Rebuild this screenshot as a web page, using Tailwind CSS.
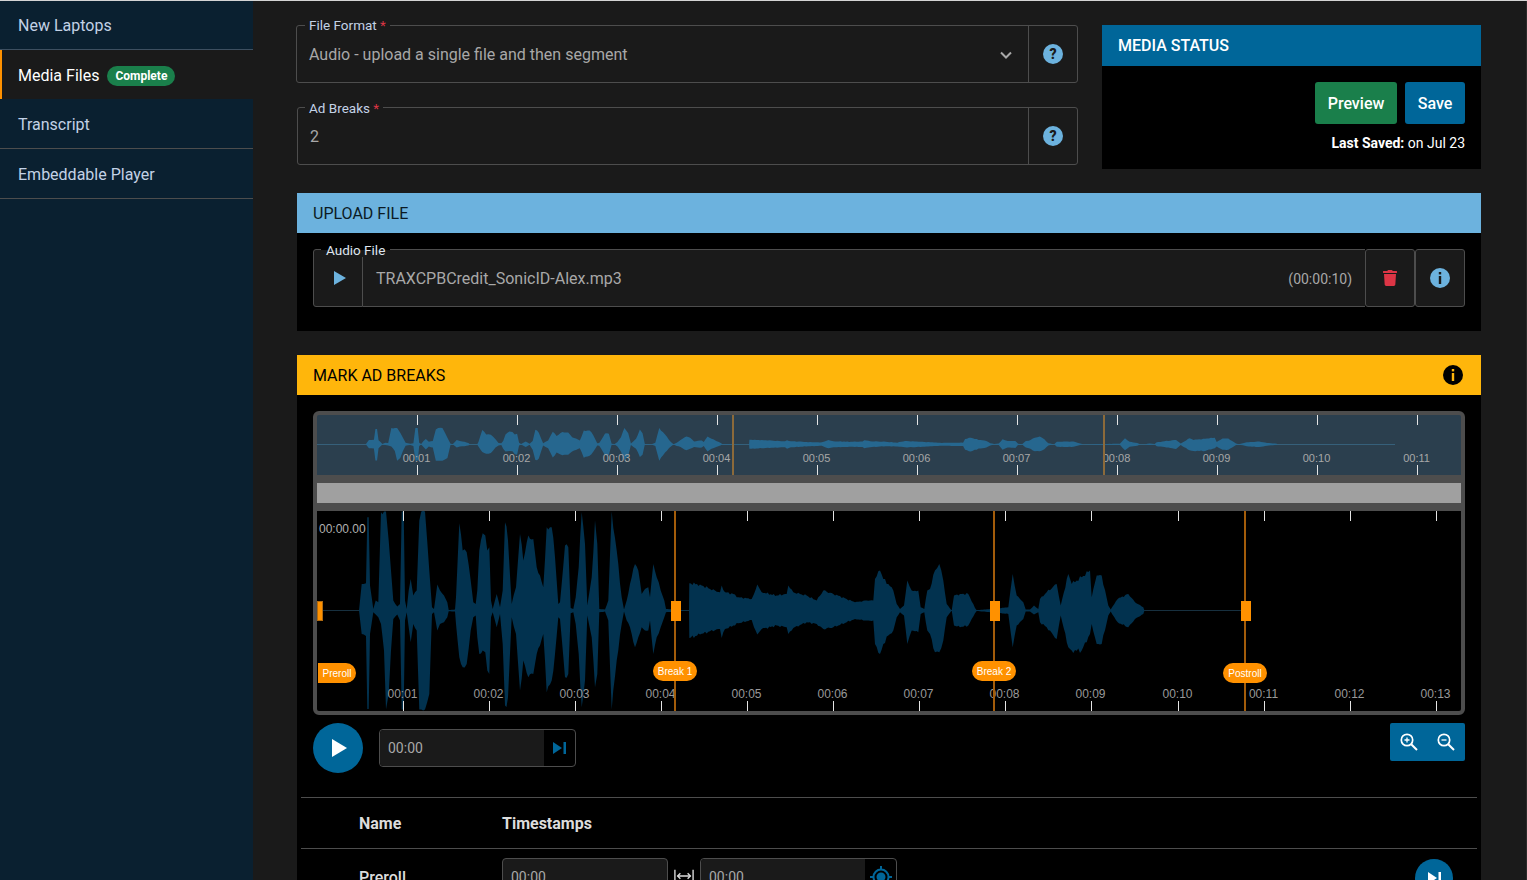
<!DOCTYPE html>
<html lang="en">
<head>
    <meta charset="UTF-8">
    <meta name="viewport" content="width=device-width, initial-scale=1.0">
    <title>Media Files</title>
    <script src="https://cdn.jsdelivr.net/npm/@tailwindcss/browser@4"></script>
</head>
<body class="h-screen overflow-hidden bg-[#1a1a1a] font-['Roboto',sans-serif] text-white">
    <div class="h-px bg-[#d4d4d4]"></div>
    <div class="flex h-[879px]">
        <!-- Sidebar -->
        <nav class="w-[253px] shrink-0 bg-[#0a2030] text-base text-[#c3d2e6]">
            <a class="flex h-[49px] items-center border-b border-[#3d4f60] pl-[18px] pt-[2px]">New Laptops</a>
            <a class="flex h-[49px] items-center gap-2 border-l-2 border-[#ff9100] bg-[#1a1a1a] pl-4 pt-[3px] text-white">Media Files
                <span class="rounded-full bg-[#1a7f4b] px-2 py-[1px] text-xs font-bold leading-[18px]">Complete</span>
            </a>
            <a class="flex h-[50px] items-center border-b border-[#4d4d4d] pl-[18px] pt-[2px]">Transcript</a>
            <a class="flex h-[50px] items-center border-b border-[#4d4d4d] pl-[18px] pt-[2px]">Embeddable Player</a>
        </nav>

        <main class="w-[1273px] overflow-hidden pl-11 pr-[45px] pt-6">
            <!-- Top form and status -->
            <div class="flex gap-6">
                <div class="flex w-[781px] flex-col gap-6">
                    <div class="relative -ml-px flex h-[58px] rounded-[3px] border border-[#4d4d4d]">
                        <span class="absolute -top-[8px] left-2 bg-[#1a1a1a] px-1 text-[13.5px] leading-[14px] text-[#c3d2e6]">File Format <span class="text-[#dc3545]">*</span></span>
                        <div class="flex flex-1 items-center justify-between pl-3 pr-[14px] pt-[2px] text-base text-[#a8a8a8]">
                            Audio - upload a single file and then segment
                            <svg class="h-4 w-4" viewBox="0 0 16 16" fill="none" stroke="#a8a8a8" stroke-width="2"><path d="M3 5.500l5 5 5-5"/></svg>
                        </div>
                        <div class="flex w-[49px] items-center justify-center border-l border-[#4d4d4d]">
                            <span class="flex h-5 w-5 items-center justify-center rounded-full bg-[#6cb2de] text-sm font-black text-[#1a1a1a]">?</span>
                        </div>
                    </div>
                    <div class="relative flex h-[58px] rounded-[3px] border border-[#4d4d4d]">
                        <span class="absolute -top-[7px] left-[7px] bg-[#1a1a1a] px-1 text-[13.5px] leading-[14px] text-[#c3d2e6]">Ad Breaks <span class="text-[#dc3545]">*</span></span>
                        <div class="flex flex-1 items-center pl-3 pt-[2px] text-base text-[#a8a8a8]">2</div>
                        <div class="flex w-[49px] items-center justify-center border-l border-[#4d4d4d]">
                            <span class="flex h-5 w-5 items-center justify-center rounded-full bg-[#6cb2de] text-sm font-black text-[#1a1a1a]">?</span>
                        </div>
                    </div>
                </div>
                <section class="h-[144px] w-[379px] bg-black">
                    <h2 class="flex h-[41px] items-center bg-[#006699] pl-4 text-base font-medium">MEDIA STATUS</h2>
                    <div class="flex justify-end gap-2 pr-4 pt-4">
                        <button class="h-[42px] w-[82px] rounded-[3px] bg-[#1a7f4b] pt-[2px] text-base font-medium">Preview</button>
                        <button class="h-[42px] w-[60px] rounded-[3px] bg-[#006699] pt-[2px] text-base font-medium">Save</button>
                    </div>
                    <p class="mt-[10px] pr-4 text-right text-sm leading-[18px]"><b>Last Saved:</b> on Jul 23</p>
                </section>
            </div>

            <!-- Upload file -->
            <section class="mt-6 bg-black pb-6">
                <h2 class="flex h-10 items-center bg-[#6cb2de] pl-4 pt-[2px] text-base text-[#0b1a24]">UPLOAD FILE</h2>
                <div class="relative mx-4 mt-4 flex h-[58px] text-[#a8a8a8]">
                    <span class="absolute -top-[6px] left-2 z-10 bg-[linear-gradient(#000_50%,#1a1a1a_50%)] px-[5px] text-[13.5px] leading-[14px] text-[#dfe6ef]">Audio File</span>
                    <div class="flex w-[50px] items-center justify-center rounded-l-[3px] border border-[#4d4d4d] bg-[#1a1a1a] pl-1">
                        <svg class="h-[14px] w-3" viewBox="0 0 12 14" fill="#6cb2de"><path d="M0 0l12 7-12 7z"/></svg>
                    </div>
                    <div class="flex flex-1 items-center justify-between border-y border-[#4d4d4d] bg-[#1a1a1a] px-[13px] pt-[2px] text-base">
                        TRAXCPBCredit_SonicID-Alex.mp3
                        <span class="text-sm">(00:00:10)</span>
                    </div>
                    <div class="flex w-[50px] items-center justify-center rounded-[3px] border border-[#4d4d4d] bg-[#1a1a1a]">
                        <svg class="h-[18px] w-[14px]" viewBox="0 0 448 512" fill="#dc3545"><path d="M432 32H312l-9.400-18.700A24 24 0 0 0 281.100 0H166.800a23.720 23.720 0 0 0-21.400 13.300L136 32H16A16 16 0 0 0 0 48v32a16 16 0 0 0 16 16h416a16 16 0 0 0 16-16V48a16 16 0 0 0-16-16zM53.200 467a48 48 0 0 0 47.900 45h245.800a48 48 0 0 0 47.900-45L416 128H32z"/></svg>
                    </div>
                    <div class="flex w-[50px] items-center justify-center rounded-[3px] border border-[#4d4d4d] bg-[#1a1a1a]">
                        <svg class="h-5 w-5" viewBox="0 0 20 20"><circle cx="10" cy="10" r="10" fill="#6cb2de"/><rect x="8.800" y="4" width="2.400" height="2.400" fill="#1a1a1a"/><rect x="8.800" y="8" width="2.400" height="8" fill="#1a1a1a"/></svg>
                    </div>
                </div>
            </section>

            <!-- Mark ad breaks -->
            <section class="mt-6 h-[600px] bg-black">
                <h2 class="flex h-10 items-center justify-between bg-[#ffb60b] pl-4 pr-[18px] text-base text-black"><span class="pt-[2px]">MARK AD BREAKS</span>
                    <svg class="h-5 w-5" viewBox="0 0 20 20"><circle cx="10" cy="10" r="10" fill="#000"/><rect x="8.800" y="4" width="2.400" height="2.400" fill="#ffb60b"/><rect x="8.800" y="8" width="2.400" height="8" fill="#ffb60b"/></svg>
                </h2>

                <!-- Waveform canvas -->
                <div class="relative mx-4 mt-4 h-[304px] overflow-hidden rounded-md border-4 border-[#4d4d4d] bg-[#4d4d4d]">
                    <svg id="mini" class="block h-[60px] w-[1144px] bg-[#2b3f4e]" viewBox="317 415 1144 60"></svg>
                    <div class="mx-0 mt-2 h-5 bg-[#a0a0a0]"></div>
                    <svg id="overview" class="mt-2 block h-[200px] w-[1144px] bg-black" viewBox="317 511 1144 200"></svg>

                    <span class="absolute left-0 top-[186px] h-5 w-[6px] border border-[#b06a10] bg-[#ff9100]"></span>
                    <span class="absolute left-[354px] top-[186px] h-5 w-[10px] bg-[#ff9100]"></span>
                    <span class="absolute left-[673px] top-[186px] h-5 w-[10px] bg-[#ff9100]"></span>
                    <span class="absolute left-[924px] top-[186px] h-5 w-[10px] bg-[#ff9100]"></span>

                    <span class="absolute left-[1px] top-[248px] flex h-5 w-[38px] items-center justify-center rounded-r-full bg-[#ff9100] font-['Liberation_Sans',sans-serif] text-[10px]">Preroll</span>
                    <span class="absolute left-[336px] top-[246px] flex h-5 w-[44px] items-center justify-center rounded-full bg-[#ff9100] font-['Liberation_Sans',sans-serif] text-[10px]">Break 1</span>
                    <span class="absolute left-[655px] top-[246px] flex h-5 w-[44px] items-center justify-center rounded-full bg-[#ff9100] font-['Liberation_Sans',sans-serif] text-[10px]">Break 2</span>
                    <span class="absolute left-[906px] top-[248px] flex h-5 w-[44px] items-center justify-center rounded-full bg-[#ff9100] font-['Liberation_Sans',sans-serif] text-[10px]">Postroll</span>
                </div>

                <!-- Player controls -->
                <div class="mx-4 mt-2 flex items-start justify-between">
                    <div class="flex items-center gap-4">
                        <button class="flex h-[50px] w-[50px] items-center justify-center rounded-full bg-[#006699]">
                            <svg class="ml-[3px] h-[18px] w-[15px]" viewBox="0 0 15 18" fill="#fff"><path d="M0 0l15 9-15 9z"/></svg>
                        </button>
                        <div class="flex h-[38px] w-[197px] rounded border border-[#4d4d4d]">
                            <div class="flex w-[164px] items-center rounded-l bg-[#1a1a1a] pl-2 text-sm text-[#a8a8a8]">00:00</div>
                            <div class="flex flex-1 items-center justify-center">
                                <svg class="h-3 w-[13px]" viewBox="0 0 13 12" fill="#006699"><path d="M0 0l9 6-9 6z"/><rect x="10.500" width="2.500" height="12"/></svg>
                            </div>
                        </div>
                    </div>
                    <div class="flex h-[38px] w-[75px] items-center justify-between rounded-[2px] bg-[#006699] px-[10px]">
                        <svg class="h-[18px] w-[18px]" viewBox="0 0 18 18" fill="none" stroke="#fff" stroke-width="1.700"><circle cx="7" cy="7" r="5.700"/><path d="M11.200 11.200L17 17" stroke-width="2"/><path d="M4.500 7h5M7 4.500v5" stroke-width="1.300"/></svg>
                        <svg class="h-[18px] w-[18px]" viewBox="0 0 18 18" fill="none" stroke="#fff" stroke-width="1.700"><circle cx="7" cy="7" r="5.700"/><path d="M11.200 11.200L17 17" stroke-width="2"/><path d="M4.500 7h5" stroke-width="1.300"/></svg>
                    </div>
                </div>

                <!-- Breaks table -->
                <div class="mx-1 mt-6 border-t border-[#4d4d4d]">
                    <div class="flex h-[51px] items-center border-b border-[#4d4d4d] pt-[2px] text-base font-bold text-[#dcdcdc]">
                        <span class="w-[201px] pl-[58px]">Name</span>
                        <span>Timestamps</span>
                    </div>
                    <div class="relative flex items-start pt-[9px]">
                        <span class="mt-2 w-[201px] pl-[58px] text-base font-medium text-[#dcdcdc]">Preroll</span>
                        <div class="flex h-[38px] w-[166px] items-center rounded border border-[#4d4d4d] bg-[#1a1a1a] pl-2 text-sm text-[#a8a8a8]">00:00</div>
                        <svg class="mx-[6px] mt-[11px] h-[14px] w-5" viewBox="0 0 22 14" fill="none" stroke="#dcdcdc" stroke-width="1.500"><path d="M1 0v14M21 0v14M4 7h14"/><path d="M7 4L4 7l3 3M15 4l3 3-3 3"/></svg>
                        <div class="flex h-[38px] w-[197px] rounded border border-[#4d4d4d]">
                            <div class="flex w-[164px] items-center rounded-l bg-[#1a1a1a] pl-2 text-sm text-[#a8a8a8]">00:00</div>
                            <div class="flex flex-1 items-center justify-center">
                                <svg class="h-[22px] w-[22px]" viewBox="0 0 22 22" fill="none" stroke="#006699" stroke-width="2"><circle cx="11" cy="11" r="7.500"/><circle cx="11" cy="11" r="3.500" fill="#006699"/><path d="M11 0v4M11 18v4M0 11h4M18 11h4"/></svg>
                            </div>
                        </div>
                        <button class="absolute right-[24px] top-[10px] flex h-[38px] w-[38px] items-center justify-center rounded-full bg-[#006699]">
                            <svg class="h-3 w-[13px]" viewBox="0 0 13 12" fill="#fff"><path d="M0 0l9 6-9 6z"/><rect x="10.500" width="2.500" height="12"/></svg>
                        </button>
                    </div>
                </div>
            </section>
        </main>
        <div class="ml-auto w-px bg-[#2b2b2b]"></div>
    </div>

    <script>
        const partA = [[147,0,0],[155,80,70],[168,82,76],[172,280,295],[176,280,295],[180,75,70],[190,5,5],[197,30,12],[205,25,20],[213,295,40],[222,297,120],[228,297,297],[236,210,250],[243,120,120],[250,30,25],[262,12,12],[270,20,30],[275,297,297],[281,297,297],[285,30,30],[290,5,5],[296,60,50],[302,95,95],[310,45,40],[320,60,60],[328,270,297],[334,297,297],[345,297,297],[358,120,250],[366,10,10],[372,5,5],[382,78,60],[390,60,40],[402,45,35],[412,25,20],[416,2,2],[435,3,3],[438,40,40],[448,262,140],[458,180,170],[470,175,160],[482,90,60],[490,25,20],[497,20,15],[502,60,80],[508,180,130],[518,232,120],[526,225,125],[532,180,180],[538,190,190],[543,30,20],[548,5,5],[560,50,50],[570,10,10],[578,60,100],[585,265,285],[594,210,260],[605,20,20],[618,70,70],[630,230,240],[640,150,150],[655,225,200],[670,215,190],[680,130,130],[690,105,105],[700,70,70],[710,250,245],[725,250,210],[735,160,130],[745,20,20],[750,25,25],[765,195,200],[775,190,190],[782,8,8],[790,5,5],[797,40,40],[806,130,130],[815,295,290],[825,200,210],[832,15,15],[845,100,80],[855,270,230],[862,200,190],[868,5,5],[885,3,3],[895,30,30],[905,297,297],[920,180,150],[935,40,40],[942,3,3],[950,30,30],[960,80,50],[975,140,110],[985,120,80],[995,50,50],[1005,65,60],[1015,70,60],[1020,40,30],[1030,140,130],[1040,100,80],[1052,60,50],[1063,30,20],[1068,5,5]];
        const partB = [[27,0,0],[28,82,82],[60,78,72],[90,65,62],[120,55,55],[125,75,82],[135,55,55],[160,50,45],[175,40,38],[215,35,28],[222,50,50],[232,78,72],[245,55,55],[290,45,45],[320,50,50],[325,75,70],[340,55,52],[380,45,35],[410,30,40],[430,60,55],[460,50,50],[500,35,35],[525,25,25],[560,30,30],[580,30,30],[585,95,100],[600,120,130],[610,95,100],[625,80,75],[640,60,60],[650,20,20],[660,5,5],[672,15,15],[682,90,100],[695,60,60],[715,60,65],[722,10,10],[733,5,5],[742,60,60],[750,65,70],[765,120,125],[778,140,125],[790,90,90],[800,20,20],[815,0,0],[822,45,45],[840,50,50],[865,50,45],[885,8,8],[890,1,1],[985,10,10],[998,110,110],[1010,45,45],[1030,25,25],[1037,3,3],[1050,3,3],[1062,15,12],[1075,5,5],[1080,35,35],[1100,55,50],[1130,80,85],[1142,15,15],[1165,110,110],[1175,80,120],[1205,100,120],[1230,120,70],[1235,40,40],[1250,105,100],[1265,105,100],[1285,15,15],[1292,3,3],[1313,35,35],[1345,50,50],[1365,25,25],[1390,10,10],[1393,1,1]];

        const CY = 610.6;
        const raw = [
            ...partA.map(p => [310 + p[0] / 3, p[1] / 3, p[2] / 3]),
            ...partB.map(p => [680 + p[0] / 3, p[1] / 3, p[2] / 3]),
        ];

        // fill in long segments and rough them up a little so the edge isn't straight
        const pts = [];
        raw.forEach((p, i) => {
            const next = raw[i + 1];
            pts.push(p);
            if (!next || next[0] - p[0] > 60) return;
            const steps = Math.floor((next[0] - p[0]) / 1.5);
            for (let s = 1; s < steps; s++) {
                const t = s / steps;
                const rough = 1 + 0.07 * Math.sin(pts.length * 2.3) * Math.cos(pts.length * 0.7);
                pts.push([
                    p[0] + (next[0] - p[0]) * t,
                    Math.min(100, (p[1] + (next[1] - p[1]) * t) * rough),
                    Math.min(100, (p[2] + (next[2] - p[2]) * t) * rough),
                ]);
            }
        });

        const upper = pts.map(p => `${p[0].toFixed(1)},${(CY - p[1]).toFixed(1)}`);
        const lower = pts.slice().reverse().map(p => `${p[0].toFixed(1)},${(CY + p[2]).toFixed(1)}`);
        const waveD = "M" + upper.concat(lower).join("L") + "Z";

        const pad = n => "00:" + String(n).padStart(2, "0");

        let mini = `<line x1="317" x2="1395" y1="444.5" y2="444.5" stroke="#36607a"/>`;
        mini += `<path d="${waveD}" fill="#26678f" transform="translate(317 444.3) scale(1.1614 .165) translate(-317 ${-CY})"/>`;
        for (let i = 1; i <= 11; i++) {
            const x = 317 + i * 100 + .5;
            mini += `<path d="M${x} 415v10M${x} 465v10" stroke="#e4e4e4"/>`;
            mini += `<text x="${x - 1}" y="462" text-anchor="middle" font-family="Liberation Sans" font-size="11" fill="#a8a8a8">${pad(i)}</text>`;
        }
        mini += `<path d="M733 415v60M1104 415v60" stroke="#8c6a3a" stroke-width="2"/>`;
        document.getElementById("mini").innerHTML = mini;

        let main = `<line x1="317" x2="1250" y1="610.5" y2="610.5" stroke="#17303f"/>`;
        main += `<path d="${waveD}" fill="#02324f"/>`;
        for (let i = 1; i <= 13; i++) {
            const x = Math.floor(317 + i * 86.1) + .5;
            main += `<path d="M${x} 511v10M${x} 701v10" stroke="#e4e4e4"/>`;
            main += `<text x="${x - 1}" y="698" text-anchor="middle" font-family="Liberation Sans" font-size="12" fill="#999">${pad(i)}</text>`;
        }
        main += `<text x="319" y="533" font-family="Liberation Sans" font-size="12" fill="#b0b0b0">00:00.00</text>`;
        main += `<path d="M675 511v200M994 511v200M1245 511v200" stroke="#a35c0a" stroke-width="2"/>`;
        document.getElementById("overview").innerHTML = main;
    </script>
</body>
</html>
